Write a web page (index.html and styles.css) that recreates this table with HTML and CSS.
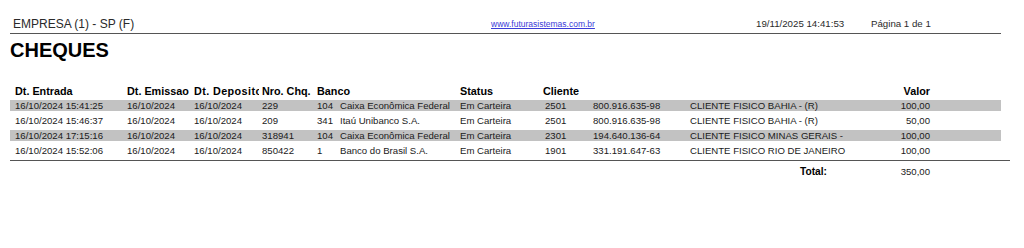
FILE: index.html
```html
<!DOCTYPE html>
<html lang="pt-BR">
<head>
<meta charset="utf-8">
<title>Cheques</title>
<link rel="stylesheet" href="styles.css">
</head>
<body>
<div class="page">
  <div class="top">
    <span class="company">EMPRESA (1) - SP (F)</span>
    <a class="site" href="#">www.futurasistemas.com.br</a>
    <span class="stamp">19/11/2025 14:41:53</span>
    <span class="pageno">Página 1 de 1</span>
  </div>
  <h1 class="title">CHEQUES</h1>
  <div class="table">
    <div class="row head">
      <div class="c first">Dt. Entrada</div>
      <div class="c">Dt. Emissao</div>
      <div class="c clip">Dt. Deposito</div>
      <div class="c">Nro. Chq.</div>
      <div class="c span2">Banco</div>
      <div class="c">Status</div>
      <div class="c span2">Cliente</div>
      <div class="c"></div>
      <div class="c num">Valor</div>
      <div class="c"></div>
    </div>
    <div class="row shade">
      <div class="c first">16/10/2024 15:41:25</div>
      <div class="c">16/10/2024</div>
      <div class="c">16/10/2024</div>
      <div class="c">229</div>
      <div class="c">104</div>
      <div class="c">Caixa Econômica Federal</div>
      <div class="c">Em Carteira</div>
      <div class="c code">2501</div>
      <div class="c">800.916.635-98</div>
      <div class="c">CLIENTE FISICO BAHIA - (R)</div>
      <div class="c num">100,00</div>
      <div class="c"></div>
    </div>
    <div class="row">
      <div class="c first">16/10/2024 15:46:37</div>
      <div class="c">16/10/2024</div>
      <div class="c">16/10/2024</div>
      <div class="c">209</div>
      <div class="c">341</div>
      <div class="c">Itaú Unibanco S.A.</div>
      <div class="c">Em Carteira</div>
      <div class="c code">2501</div>
      <div class="c">800.916.635-98</div>
      <div class="c">CLIENTE FISICO BAHIA - (R)</div>
      <div class="c num">50,00</div>
      <div class="c"></div>
    </div>
    <div class="row shade">
      <div class="c first">16/10/2024 17:15:16</div>
      <div class="c">16/10/2024</div>
      <div class="c">16/10/2024</div>
      <div class="c">318941</div>
      <div class="c">104</div>
      <div class="c">Caixa Econômica Federal</div>
      <div class="c">Em Carteira</div>
      <div class="c code">2301</div>
      <div class="c">194.640.136-64</div>
      <div class="c">CLIENTE FISICO MINAS GERAIS -</div>
      <div class="c num">100,00</div>
      <div class="c"></div>
    </div>
    <div class="row">
      <div class="c first">16/10/2024 15:52:06</div>
      <div class="c">16/10/2024</div>
      <div class="c">16/10/2024</div>
      <div class="c">850422</div>
      <div class="c">1</div>
      <div class="c">Banco do Brasil S.A.</div>
      <div class="c">Em Carteira</div>
      <div class="c code">1901</div>
      <div class="c">331.191.647-63</div>
      <div class="c">CLIENTE FISICO RIO DE JANEIRO</div>
      <div class="c num">100,00</div>
      <div class="c"></div>
    </div>
  </div>
  <div class="totals">
    <span class="total-label">Total:</span>
    <span class="total-value">350,00</span>
  </div>
</div>
</body>
</html>
```

FILE: styles.css
```css
html, body {
  margin: 0;
  padding: 0;
  background: #ffffff;
}

body {
  font-family: "Liberation Sans", Arial, sans-serif;
  color: #1a1a1a;
}

.page {
  width: 1024px;
  height: 248px;
}

.top {
  margin: 0 23px 0 10px;
  height: 34px;
  box-sizing: border-box;
  border-bottom: 1px solid #555555;
  display: grid;
  grid-template-columns: 481px 265px 115px 1fr;
  align-items: end;
  padding-bottom: 2px;
  line-height: 14px;
}

.company {
  padding-left: 3px;
  font-size: 12px;
  color: #2a2a2a;
}

.site {
  font-size: 8.5px;
  color: #3b3bd8;
  text-decoration: underline;
}

.stamp,
.pageno {
  font-size: 9.7px;
  color: #2a2a2a;
}

.title {
  margin: 6px 0 0 10px;
  font-size: 20px;
  line-height: 20px;
  font-weight: bold;
  color: #000000;
}

.table {
  margin: 25px 0 0 10px;
  width: 991px;
}

.row {
  display: grid;
  grid-template-columns: 117px 67px 68px 55px 23px 120px 83px 50px 97px 180px 60px 71px;
  height: 11px;
  line-height: 11px;
  font-size: 9.6px;
  margin-bottom: 4px;
  color: #1a1a1a;
}

.row.head {
  height: 13px;
  line-height: 13px;
  font-size: 10.8px;
  font-weight: bold;
  color: #000000;
  margin-bottom: 2px;
}

.row.shade {
  background: #c2c2c2;
}

.c {
  white-space: nowrap;
}

.c.first {
  padding-left: 5px;
}

.c.span2 {
  grid-column: span 2;
}

.c.clip {
  overflow: hidden;
  letter-spacing: 0.4px;
  max-width: 65px;
}

.c.code {
  padding-left: 2px;
}

.c.num {
  text-align: right;
}

.totals {
  margin: 0 0 0 10px;
  width: 1000px;
  border-top: 1px solid #555555;
  display: grid;
  grid-template-columns: 817px 103px;
  height: 22px;
  line-height: 22px;
}

.total-label {
  font-size: 10.2px;
  font-weight: bold;
  color: #000000;
  text-align: right;
}

.total-value {
  font-size: 9.6px;
  text-align: right;
}
```
